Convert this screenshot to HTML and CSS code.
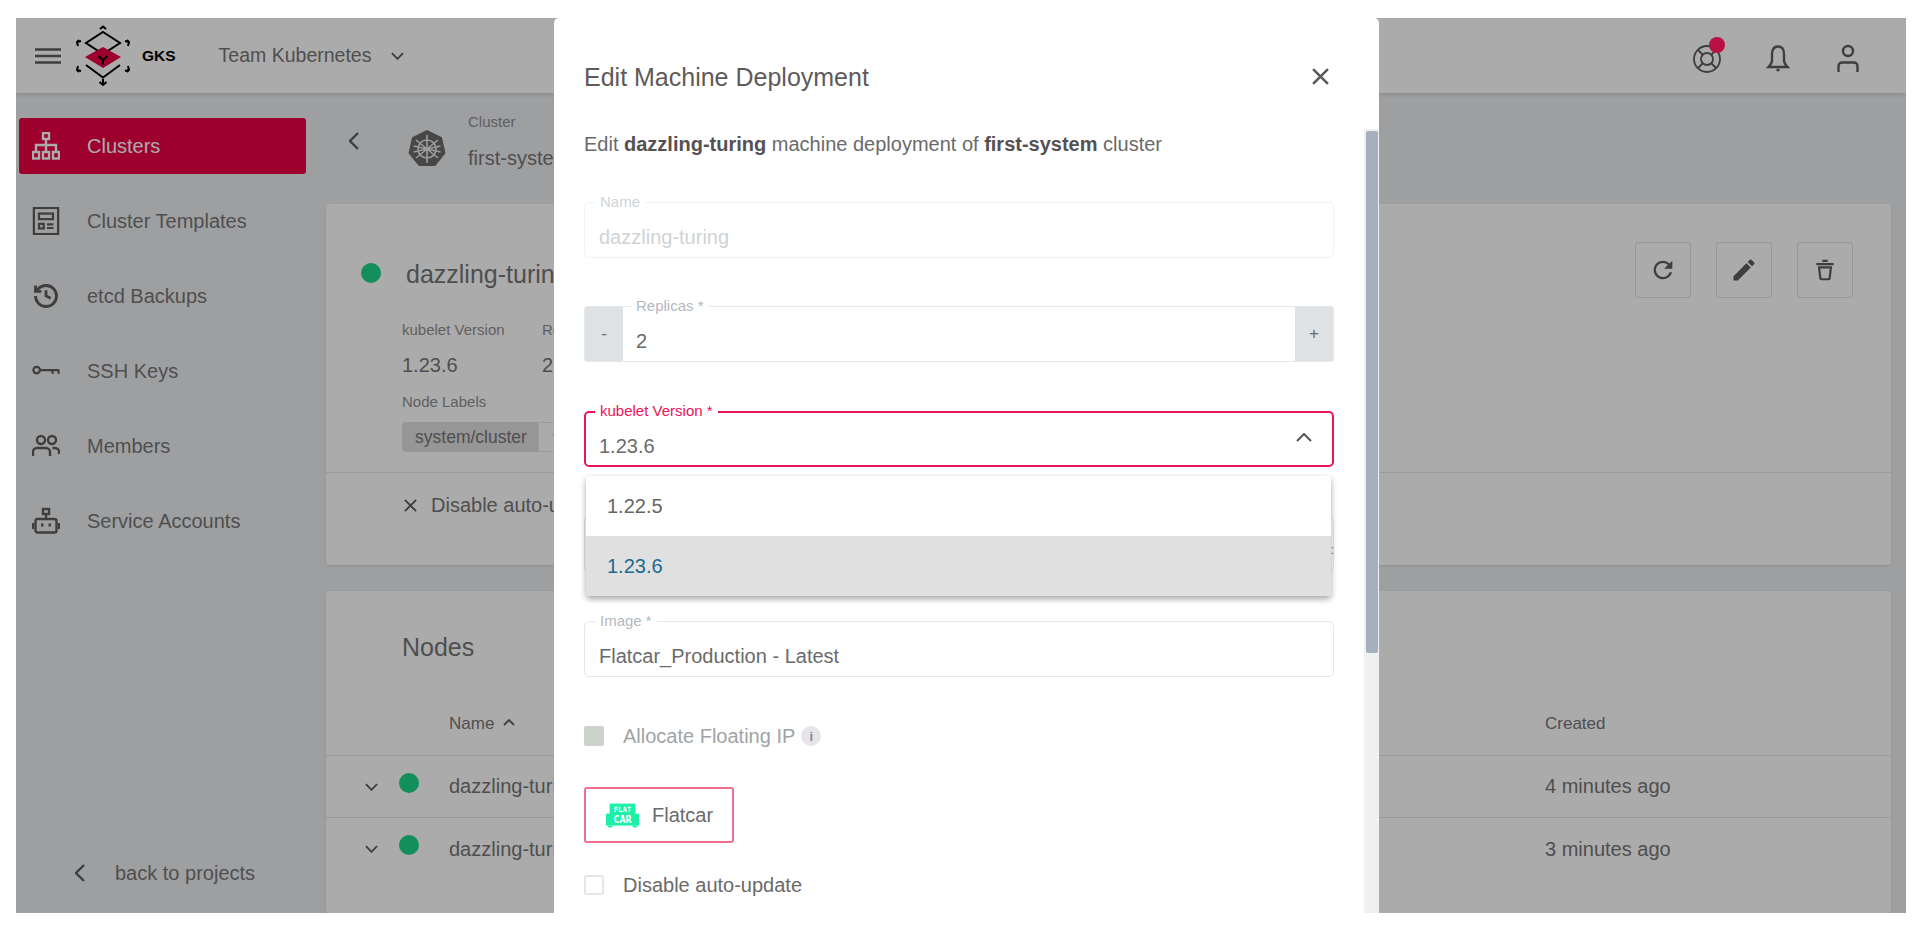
FILE: index.html
```html
<!DOCTYPE html>
<html lang="en">
<head>
    <meta charset="UTF-8">
    <meta name="viewport" content="width=device-width, initial-scale=1.0">
    <title>Edit Machine Deployment</title>
    <link rel="stylesheet" href="styles.css">
</head>
<body>
<div class="frame">
    <header class="topbar">
        <svg class="burger" viewBox="0 0 26 16"><path d="M0 1.500h26M0 8h26M0 14.500h26"/></svg>
        <svg class="logo" viewBox="0 0 56 62">
            <g fill="none" stroke="#000" stroke-width="2">
                <path d="M25 4l3-2.500L31 4"/>
                <path d="M28 7l17 11-17 11-17-11z"/>
                <path d="M11 40l17 12.500L45 40"/>
                <path d="M4 15l-2 2 1 4M2 17l4-1"/>
                <path d="M52 15l2 2-1 4M54 17l-4-1"/>
                <path d="M4 47l-2-2 1-4M2 45l4 1"/>
                <path d="M52 47l2-2-1-4M54 45l-4 1"/>
                <path d="M28 54v6M24.500 57l3.500 3 3.500-3"/>
            </g>
            <path class="logo-red" d="M28 22l18 10-18 11-18-11z"/>
            <path d="M28 35v5M23.500 31l4.500 4 4.500-4" fill="none" stroke="#000" stroke-width="2"/>
        </svg>
        <span class="logo-name">GKS</span>
        <span class="project">Team Kubernetes</span>
        <svg class="chev-down" viewBox="0 0 14 8"><path d="M1 1l6 6 6-6"/></svg>
        <div class="top-icons">
            <span class="help">
                <svg class="top-icon icon-thin" viewBox="0 0 30 30"><circle cx="15" cy="15" r="13"/><circle cx="15" cy="15" r="6"/><path d="M6 6l5 5M24 6l-5 5M6 24l5-5M24 24l-5-5"/></svg>
                <i class="help-dot"></i>
            </span>
            <svg class="top-icon" viewBox="0 0 30 30"><path d="M15 2.500c-5 0-6 4-6 8v6c0 3-2 5-3.500 6.500h19c-1.500-1.500-3.500-3.500-3.500-6.500v-6c0-4-1-8-6-8zM13.500 26h3"/></svg>
            <svg class="top-icon" viewBox="0 0 30 30"><circle cx="15" cy="7" r="5"/><path d="M5.500 28v-6a3.500 3.500 0 0 1 3.500-3.500h12a3.500 3.500 0 0 1 3.500 3.500v6"/></svg>
        </div>
    </header>

    <div class="main">
        <aside class="sidebar">
            <a class="nav-item active">
                <svg class="nav-icon" viewBox="0 0 28 28"><rect x="11" y="1" width="6" height="6"/><path d="M14 7v6M4 20v-7h20v7M14 13v7"/><rect x="1" y="20" width="6" height="6.500"/><rect x="11" y="20" width="6" height="6.500"/><rect x="21" y="20" width="6" height="6.500"/></svg>
                Clusters
            </a>
            <a class="nav-item">
                <svg class="nav-icon" viewBox="0 0 28 30"><rect x="1" y="1" width="26" height="28"/><rect x="6.500" y="7" width="15" height="6"/><rect x="6.500" y="18" width="5" height="5"/><path d="M15 18.500h7M15 22.500h7"/></svg>
                Cluster Templates
            </a>
            <a class="nav-item">
                <svg class="nav-icon" viewBox="0 0 24 24"><path d="M3 12a9 9 0 1 0 9-9 9.750 9.750 0 0 0-6.740 2.740L3 8"/><path d="M3 3v5h5"/><path d="M12 7v5l4 2"/></svg>
                etcd Backups
            </a>
            <a class="nav-item">
                <svg class="nav-icon" viewBox="0 0 30 12"><circle cx="5" cy="5" r="3.500"/><path d="M9 5h20M22 5v4M28.500 5v4"/></svg>
                SSH Keys
            </a>
            <a class="nav-item">
                <svg class="nav-icon" viewBox="0 0 28 24"><circle cx="9" cy="6" r="4"/><circle cx="20" cy="6" r="4"/><path d="M1 22v-4a4 4 0 0 1 4-4h9a4 4 0 0 1 4 4v4M20.500 14H23a4 4 0 0 1 4 4v2"/></svg>
                Members
            </a>
            <a class="nav-item">
                <svg class="nav-icon" viewBox="0 0 28 26"><rect x="11" y="1" width="6" height="5"/><path d="M14 6v5"/><rect x="3.500" y="11" width="21" height="13.500" rx="2"/><path d="M1 15v6M27 15v6"/><path d="M9 17h2.500M16.500 17H19" stroke-width="3"/></svg>
                Service Accounts
            </a>
            <a class="back-link">
                <svg class="chev-left" viewBox="0 0 10 18"><path d="M9 1L1 9l8 8"/></svg>
                back to projects
            </a>
        </aside>

        <main class="content">
            <div class="page-head">
                <svg class="chev-left back-btn" viewBox="0 0 10 18"><path d="M9 1L1 9l8 8"/></svg>
                <svg class="k8s" viewBox="0 0 38 38">
                    <polygon points="19,0 33.900,7.200 37.500,23.200 27.200,36.100 10.800,36.100 .5,23.200 4.100,7.200" fill="#6a6a6c"/>
                    <g fill="none" stroke="#e8e8ea" stroke-width="1.600">
                        <circle cx="19" cy="19" r="9"/>
                        <path d="M19 5v28M8 10l22 18M30 10L8 28M5.500 16l27 6M32.500 16l-27 6"/>
                    </g>
                </svg>
                <div class="crumb">
                    <span class="crumb-label">Cluster</span>
                    <span class="crumb-name">first-system</span>
                </div>
            </div>

            <section class="card card-info">
                <div class="info-top">
                    <div class="title-row">
                        <i class="dot"></i>
                        <h2 class="md-name">dazzling-turing</h2>
                        <div class="actions">
                            <button class="act-btn"><svg viewBox="0 0 24 24"><path d="M17.650 6.350A7.958 7.958 0 0 0 12 4c-4.420 0-7.990 3.580-7.990 8s3.570 8 7.990 8c3.730 0 6.840-2.550 7.730-6h-2.080A5.990 5.990 0 0 1 12 18c-3.310 0-6-2.690-6-6s2.690-6 6-6c1.660 0 3.140.69 4.220 1.780L13 11h7V4l-2.350 2.350z"/></svg></button>
                            <button class="act-btn"><svg viewBox="0 0 24 24"><path d="M3 17.250V21h3.750L17.810 9.940l-3.750-3.750L3 17.250zM20.710 7.040a.996.996 0 0 0 0-1.410l-2.340-2.340a.996.996 0 0 0-1.410 0l-1.830 1.830 3.750 3.750 1.830-1.830z"/></svg></button>
                            <button class="act-btn"><svg class="trash" viewBox="0 0 24 24"><path d="M4 6.500h16M9.500 3.500h5M6.500 9.500l1.200 10a1 1 0 0 0 1 1h6.600a1 1 0 0 0 1-1l1.200-10z"/></svg></button>
                        </div>
                    </div>
                    <div class="meta">
                        <div class="meta-col">
                            <span class="meta-label">kubelet Version</span>
                            <span class="meta-value">1.23.6</span>
                        </div>
                        <div class="meta-col">
                            <span class="meta-label">Replicas</span>
                            <span class="meta-value">2</span>
                        </div>
                    </div>
                    <span class="meta-label labels-head">Node Labels</span>
                    <div class="chip">
                        <span class="chip-key">system/cluster</span>
                        <span class="chip-val">first-system</span>
                    </div>
                </div>
                <div class="info-foot">
                    <svg class="x-small" viewBox="0 0 16 16"><path d="M2 2l12 12M14 2L2 14"/></svg>
                    Disable auto-update
                </div>
            </section>

            <section class="card card-nodes">
                <h2 class="nodes-title">Nodes</h2>
                <div class="node-row node-head">
                    <span></span>
                    <span></span>
                    <span>Name <svg class="sort" viewBox="0 0 12 7"><path d="M1 6l5-5 5 5"/></svg></span>
                    <span>Created</span>
                </div>
                <div class="node-row">
                    <svg class="chev-down" viewBox="0 0 14 8"><path d="M1 1l6 6 6-6"/></svg>
                    <i class="dot dot-up"></i>
                    <span>dazzling-turing-1</span>
                    <span>4 minutes ago</span>
                </div>
                <div class="node-row">
                    <svg class="chev-down" viewBox="0 0 14 8"><path d="M1 1l6 6 6-6"/></svg>
                    <i class="dot dot-up"></i>
                    <span>dazzling-turing-2</span>
                    <span>3 minutes ago</span>
                </div>
            </section>
        </main>
    </div>

    <div class="backdrop"></div>

    <div class="modal">
        <div class="modal-head">
            <h1 class="modal-title">Edit Machine Deployment</h1>
            <svg class="modal-close" viewBox="0 0 16 16"><path d="M1 1l14 14M15 1L1 15"/></svg>
        </div>
        <div class="modal-body">
            <p class="modal-desc">Edit <b>dazzling-turing</b> machine deployment of <b>first-system</b> cluster</p>

            <div class="field field-off">
                <label class="field-label">Name</label>
                <span class="field-value">dazzling-turing</span>
            </div>

            <div class="field field-number">
                <span class="step">-</span>
                <label class="field-label">Replicas *</label>
                <span class="field-value">2</span>
                <span class="step">+</span>
            </div>

            <div class="field field-focus">
                <label class="field-label">kubelet Version *</label>
                <span class="field-value">1.23.6</span>
                <svg class="chev-up" viewBox="0 0 16 9"><path d="M1 8l7-7 7 7"/></svg>
                <div class="dropdown">
                    <div class="option">1.22.5</div>
                    <div class="option selected">1.23.6</div>
                </div>
            </div>

            <div class="field field-hidden"></div>

            <div class="field">
                <label class="field-label">Image *</label>
                <span class="field-value">Flatcar_Production - Latest</span>
            </div>

            <div class="check-row check-off">
                <span class="box box-off"></span>
                Allocate Floating IP
                <span class="info-badge">i</span>
            </div>

            <div class="os-tile">
                <svg class="flatcar" viewBox="0 0 36 26">
                    <rect x="4" y="0" width="28" height="12" fill="#1df0a6"/>
                    <rect x="0" y="11" width="36" height="13" fill="#1df0a6"/>
                    <rect x="2" y="24" width="5" height="2" fill="#1df0a6"/>
                    <rect x="29" y="24" width="5" height="2" fill="#1df0a6"/>
                    <text x="18" y="9.500" class="flatcar-text">FLAT</text>
                    <text x="18" y="21.500" class="flatcar-text flatcar-big">CAR</text>
                </svg>
                Flatcar
            </div>

            <div class="check-row">
                <span class="box"></span>
                Disable auto-update
            </div>
        </div>
        <div class="scroll-track"><div class="scroll-thumb"></div></div>
    </div>
</div>
</body>
</html>
```

FILE: styles.css
```css
* { box-sizing: border-box; }
html, body { height: 100%; }
body { margin: 0; padding: 18px 14px 13px 16px; background: #fff; font-family: "Liberation Sans", Arial, sans-serif; color: #767677; overflow: hidden; }

.frame { position: relative; height: 895px; background: #eceef0; overflow: hidden; display: flex; flex-direction: column; }
.backdrop { position: absolute; inset: 0; z-index: 5; background: rgba(0, 0, 0, .33); }

/* top bar */
.topbar { height: 75px; flex: none; background: #fff; display: flex; align-items: center; box-shadow: 0 2px 4px rgba(0, 0, 0, .12); }
.burger { width: 26px; height: 16px; margin-left: 19px; fill: none; stroke: #5d5d5d; stroke-width: 2.400; }
.logo { width: 56px; height: 62px; margin-left: 14px; }
.logo-red { fill: #ea0044; }
.logo-name { margin-left: 11px; font-size: 15.5px; font-weight: 700; color: #000; }
.project { margin-left: 43px; font-size: 19.5px; color: #767677; }
.chev-down { width: 13px; height: 8px; fill: none; stroke: #5d5d5d; stroke-width: 2; }
.topbar .chev-down { margin-left: 20px; }
.top-icons { margin-left: auto; margin-right: 43px; margin-top: 6px; display: flex; align-items: center; gap: 40px; }
.top-icon { width: 30px; height: 30px; display: block; fill: none; stroke: #5d5d5d; stroke-width: 2.400; }
.icon-thin { stroke-width: 1.800; }
.help { position: relative; display: block; margin-right: 1px; }
.help-dot { position: absolute; z-index: 6; top: -7px; right: -3px; width: 16px; height: 16px; border-radius: 50%; background: #bb1044; }

/* sidebar */
.main { flex: 1; display: flex; min-height: 0; }
.sidebar { width: 310px; flex: none; padding: 25px 0 12px 3px; display: flex; flex-direction: column; }
.nav-item { width: 287px; height: 56px; flex: none; margin-bottom: 19px; padding-left: 13px; border-radius: 3px; display: flex; align-items: center; gap: 27px; font-size: 20px; color: #767677; }
.nav-item.active { background: #ea0044; color: #fff; }
.nav-icon { width: 28px; height: 28px; flex: none; fill: none; stroke: #5d5d5d; stroke-width: 2.400; }
.active .nav-icon { stroke: #fff; }
.back-link { margin-top: auto; height: 56px; padding-left: 56px; display: flex; align-items: center; gap: 30px; font-size: 20px; }
.chev-left { width: 10px; height: 18px; flex: none; fill: none; stroke: #5d5d5d; stroke-width: 2.400; }

/* content */
.content { flex: 1; min-width: 0; padding-right: 15px; display: flex; flex-direction: column; }
.page-head { height: 111px; flex: none; display: flex; align-items: flex-start; padding-top: 27px; }
.back-btn { margin: 12px 0 0 23px; }
.k8s { width: 38px; height: 38px; margin: 10px 0 0 49px; }
.crumb { margin-left: 22px; display: flex; flex-direction: column; }
.crumb-label { font-size: 15px; color: #8f8f90; line-height: 20px; margin-top: -8px; }
.crumb-name { font-size: 20px; line-height: 24px; margin-top: 14px; }

.card { background: #fff; border-radius: 4px; box-shadow: 0 1px 3px rgba(0, 0, 0, .1); }
.card-info { height: 361px; flex: none; margin-bottom: 26px; }
.info-top { height: 269px; padding: 38px 38px 0 76px; border-bottom: 1px solid #e6e6e6; }
.title-row { display: flex; align-items: center; height: 56px; margin-left: -41px; }
.dot { width: 20px; height: 20px; border-radius: 50%; background: #1bd688; flex: none; display: block; }
.md-name { margin: 8px 0 0 25px; font-size: 25px; font-weight: 400; color: #767677; }
.title-row .dot { margin-top: 6px; }
.actions { margin-left: auto; display: flex; gap: 25px; }
.act-btn { width: 56px; height: 56px; padding: 0; background: #fff; border: 1px solid #e0e0e0; border-radius: 3px; display: flex; align-items: center; justify-content: center; }
.act-btn svg { width: 28px; height: 28px; fill: #5d5d5d; }
.act-btn .trash { width: 26px; height: 26px; fill: none; stroke: #5d5d5d; stroke-width: 2; }
.meta { display: flex; margin-top: 22px; }
.meta-col { width: 140px; display: flex; flex-direction: column; }
.meta-label { font-size: 15px; line-height: 20px; color: #8f8f90; display: block; }
.meta-value { font-size: 20px; line-height: 24px; margin-top: 13px; }
.labels-head { margin-top: 15px; }
.chip { margin-top: 10px; display: flex; height: 30px; font-size: 17.5px; line-height: 30px; }
.chip-key { width: 136px; text-align: center; padding-left: 2px; background: #e0e0e0; border-radius: 4px 0 0 4px; color: #767677; white-space: nowrap; }
.chip-val { padding: 0 14px; border: 1px solid #e8e8e8; }
.info-foot { height: 64px; padding-left: 77px; display: flex; align-items: center; gap: 13px; font-size: 20px; }
.x-small { width: 15px; height: 15px; fill: none; stroke: #5d5d5d; stroke-width: 2; }

.card-nodes { flex: 1; min-height: 0; padding-top: 41px; }
.nodes-title { margin: 0 0 0 76px; height: 30px; line-height: 30px; font-size: 25px; font-weight: 400; color: #767677; }
.node-row { display: grid; grid-template-columns: 34px 50px 1096px 1fr; align-items: center; height: 62px; padding-left: 39px; border-bottom: 1px solid #e4e4e4; font-size: 20px; }
.node-row:last-child { border-bottom: none; }
.node-head { height: 63px; margin-top: 31px; font-size: 17px; }
.dot-up { margin-top: -8px; }
.sort { width: 12px; height: 7px; margin: 0 0 3px 4px; fill: none; stroke: #5d5d5d; stroke-width: 1.800; }

/* modal */
.modal { position: absolute; z-index: 10; top: 0; left: 538px; width: 825px; height: 895px; background: #fff; border-radius: 5px 5px 0 0; color: #6a6a6a; overflow: hidden; }
.modal-head { height: 111px; padding: 42px 49px 0 30px; display: flex; align-items: flex-start; justify-content: space-between; }
.modal-title { margin: 0; font-size: 25px; line-height: 34px; font-weight: 400; color: #5f5a5c; }
.modal-close { width: 17px; height: 17px; margin-top: 8px; margin-right: 1px; fill: none; stroke: #5a5a5a; stroke-width: 2.400; }
.modal-body { padding: 0 45px 0 30px; }
.modal-desc { margin: 0 0 43px; height: 30px; font-size: 20px; line-height: 30px; }
.modal-desc b { font-weight: 700; color: #555153; }

.field { position: relative; height: 56px; margin-bottom: 49px; display: flex; align-items: flex-start; border: 1px solid #e6e8eb; border-radius: 5px; padding: 21px 14px 0; font-size: 20px; line-height: 26px; }
.field-label { position: absolute; top: -10px; left: 10px; padding: 0 5px; background: #fff; font-size: 15px; line-height: 18px; color: #b4b8bc; }
.field-off { border-color: #f1f2f4; margin-bottom: 48px; }
.field-off .field-label, .field-off .field-value { color: #cfd3d6; }
.field-number { padding: 0; border-radius: 3px; }
.field-number .field-label { left: 46px; }
.field-number .field-value { flex: 1; padding: 21px 13px 0; }
.step { width: 38px; height: 100%; background: #dfe2e5; display: flex; align-items: center; justify-content: center; font-size: 17px; color: #6a6a6a; }
.field-focus { border: 2px solid #ea1458; padding: 20px 13px 0; }
.field-focus .field-label { color: #ea1458; top: -11px; left: 9px; }
.chev-up { position: absolute; right: 20px; top: 20px; width: 16px; height: 9px; fill: none; stroke: #555; stroke-width: 2; }
.dropdown { position: absolute; top: 63px; left: 0; right: 1px; background: #fff; border-radius: 4px; box-shadow: 0 3px 6px rgba(0, 0, 0, .35); overflow: hidden; z-index: 2; }
.option { height: 60px; padding-left: 21px; display: flex; align-items: center; font-size: 20px; color: #666; }
.option.selected { background: #e0e0e0; color: #1b6a92; }
.field-hidden::after { content: ":"; position: absolute; right: -1px; top: 26px; font-size: 13px; line-height: 14px; color: #777; }

.check-row { display: flex; align-items: center; height: 20px; font-size: 20px; }
.check-off { color: #a0a4a6; }
.box { width: 20px; height: 20px; margin-right: 19px; border: 2px solid #e3e6ea; border-radius: 3px; flex: none; }
.box-off { background: #ccd3cb; border-color: #ccd3cb; border-radius: 2px; }
.info-badge { width: 20px; height: 20px; margin-left: 6px; border-radius: 50%; background: #e3e5e8; color: #888; font-size: 13px; font-weight: 700; display: flex; align-items: center; justify-content: center; }
.os-tile { width: 150px; height: 56px; margin: 41px 0 32px; padding-left: 20px; border: 2px solid #f06f90; border-radius: 3px; display: flex; align-items: center; gap: 13px; font-size: 20px; }
.flatcar { width: 33px; height: 25px; flex: none; }
.flatcar-text { font-family: "DejaVu Sans Mono", monospace; font-size: 8px; font-weight: 700; fill: #fff; text-anchor: middle; }
.flatcar-big { font-size: 11px; }

.scroll-track { position: absolute; top: 111px; right: 0; bottom: 0; width: 15px; background: #eef0f2; padding-left: 2px; }
.scroll-thumb { width: 12px; height: 522px; margin-top: 2px; background: #a5afbd; border-radius: 2px; }
```
